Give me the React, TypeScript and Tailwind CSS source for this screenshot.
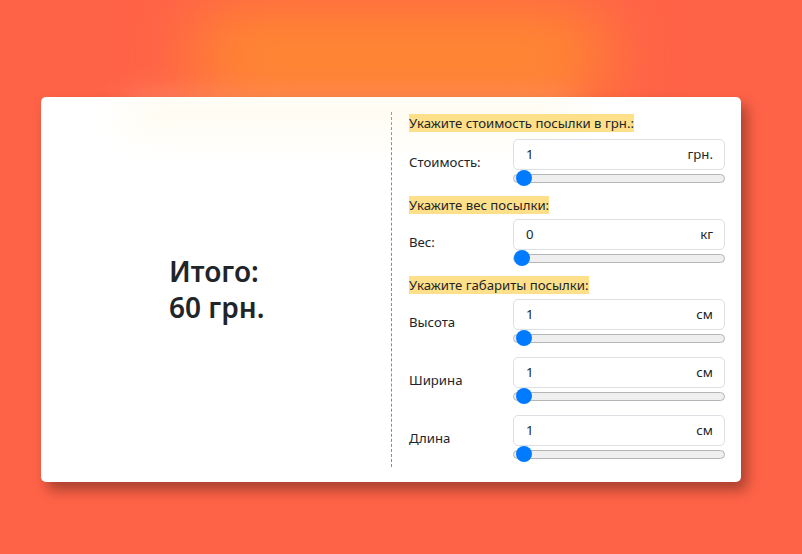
import { useState } from "react";

type Field = {
  label: string;
  unit: string;
  value: number;
};

const rangeCls =
  "block w-full h-[16px] appearance-none bg-transparent cursor-pointer " +
  "[&::-webkit-slider-runnable-track]:h-[9px] [&::-webkit-slider-runnable-track]:rounded-full " +
  "[&::-webkit-slider-runnable-track]:bg-[#efefef] [&::-webkit-slider-runnable-track]:border " +
  "[&::-webkit-slider-runnable-track]:border-[#b5b5b5] " +
  "[&::-webkit-slider-thumb]:appearance-none [&::-webkit-slider-thumb]:w-[16px] [&::-webkit-slider-thumb]:h-[16px] " +
  "[&::-webkit-slider-thumb]:rounded-full [&::-webkit-slider-thumb]:bg-[#007bff] [&::-webkit-slider-thumb]:mt-[-4.5px]";

function Heading({ children }: { children: React.ReactNode }) {
  return (
    <div className="h-[19px] leading-[19px]">
      <span className="bg-[#ffe08a] text-[13.2px] font-normal text-[#212529]">{children}</span>
    </div>
  );
}

function InputRow({ field }: { field: Field }) {
  const [value, setValue] = useState(field.value);
  return (
    <div className="flex items-center">
      <div className="w-[104px] text-[13.2px] font-normal text-[#212529]">{field.label}</div>
      <div className="flex-1">
        <div className="flex items-center h-[31px] rounded-[5px] border border-[#dcdfe3] bg-white pl-[12px] pr-[11px]">
          <span className="flex-1 text-[13.2px] text-[#212529]">{value}</span>
          <span className="text-[13.2px] text-[#212529]">{field.unit}</span>
        </div>
        <input
          type="range"
          min={0}
          max={100}
          value={value}
          onChange={(e) => setValue(Number(e.target.value))}
          className={rangeCls}
        />
      </div>
    </div>
  );
}

export default function App() {
  const dims: Field[] = [
    { label: "Высота", unit: "см", value: 1 },
    { label: "Ширина", unit: "см", value: 1 },
    { label: "Длина", unit: "см", value: 1 },
  ];

  return (
    <div
      className="relative min-h-[554px] w-full overflow-hidden bg-[#ff6347] pt-[97px]"
      style={{ fontFamily: '"Noto Sans", "Open Sans", sans-serif' }}
    >
      {/* top glow */}
      <div className="pointer-events-none absolute left-[190px] top-[8px] h-[95px] w-[420px] rounded-full bg-[#ff8a30] blur-[34px]" />

      <div className="relative ml-[41px] flex h-[385px] w-[700px] rounded-[5px] bg-white shadow-[6px_8px_14px_rgba(0,0,0,0.35)]">
        <div className="pointer-events-none absolute left-[80px] top-[0px] h-[36px] w-[460px] rounded-full bg-[#fff3c0] opacity-25 blur-[16px]" />

        {/* total */}
        <div className="relative flex w-[350px] items-center pl-[128px] pb-[2px]">
          <div className="text-[28px] font-semibold leading-[36px] text-[#212529]">
            Итого:
            <br />
            60 грн.
          </div>
        </div>

        <div className="my-[15px] border-l border-dashed border-[#8a8a8a]" />

        {/* form */}
        <div className="relative flex-1 pl-[17px] pr-[16px] pt-[16px]">
          <Heading>Укажите стоимость посылки в грн.:</Heading>
          <div className="mt-[7px]">
            <InputRow field={{ label: "Стоимость:", unit: "грн.", value: 1 }} />
          </div>
          <div className="mt-[9px]">
            <Heading>Укажите вес посылки:</Heading>
          </div>
          <div className="mt-[5px]">
            <InputRow field={{ label: "Вес:", unit: "кг", value: 0 }} />
          </div>
          <div className="mt-[9px]">
            <Heading>Укажите габариты посылки:</Heading>
          </div>
          <div className="mt-[5px] flex flex-col gap-[11px]">
            {dims.map((d) => (
              <InputRow key={d.label} field={d} />
            ))}
          </div>
        </div>
      </div>
    </div>
  );
}
